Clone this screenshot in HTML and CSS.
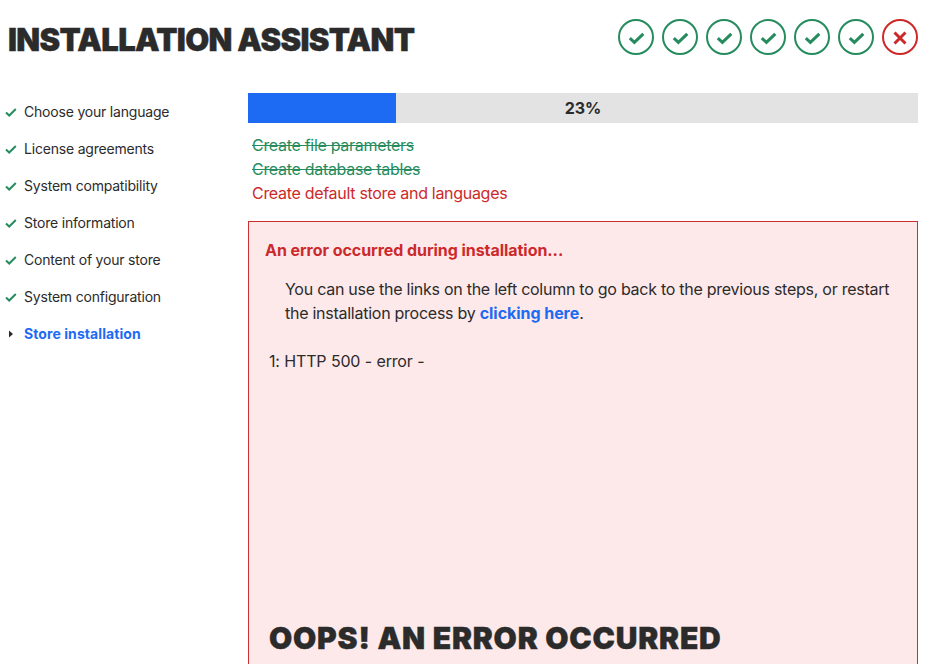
FILE: index.html
```html
<!DOCTYPE html>
<html lang="en">
<head>
<meta charset="utf-8">
<title>Installation Assistant</title>
<link rel="stylesheet" href="styles.css">
</head>
<body>
<header class="header">
  <h1 class="title">INSTALLATION ASSISTANT</h1>
  <div class="status">
    <svg class="badge ok" viewBox="0 0 36 36"><circle cx="18" cy="18" r="17"/><path d="M11.8 19.1l4.6 4.3 8.9-8.5"/></svg>
    <svg class="badge ok" viewBox="0 0 36 36"><circle cx="18" cy="18" r="17"/><path d="M11.8 19.1l4.6 4.3 8.9-8.5"/></svg>
    <svg class="badge ok" viewBox="0 0 36 36"><circle cx="18" cy="18" r="17"/><path d="M11.8 19.1l4.6 4.3 8.9-8.5"/></svg>
    <svg class="badge ok" viewBox="0 0 36 36"><circle cx="18" cy="18" r="17"/><path d="M11.8 19.1l4.6 4.3 8.9-8.5"/></svg>
    <svg class="badge ok" viewBox="0 0 36 36"><circle cx="18" cy="18" r="17"/><path d="M11.8 19.1l4.6 4.3 8.9-8.5"/></svg>
    <svg class="badge ok" viewBox="0 0 36 36"><circle cx="18" cy="18" r="17"/><path d="M11.8 19.1l4.6 4.3 8.9-8.5"/></svg>
    <svg class="badge err" viewBox="0 0 36 36"><circle cx="18" cy="18" r="17"/><path d="M12.5 13.5l11 11M23.5 13.5l-11 11"/></svg>
  </div>
</header>
<div class="layout">
  <nav class="nav">
    <div class="nav-item"><svg class="tick" viewBox="0 0 12 12"><path d="M1 6.5l3.2 3 6.6-6.5"/></svg>Choose your language</div>
    <div class="nav-item"><svg class="tick" viewBox="0 0 12 12"><path d="M1 6.5l3.2 3 6.6-6.5"/></svg>License agreements</div>
    <div class="nav-item"><svg class="tick" viewBox="0 0 12 12"><path d="M1 6.5l3.2 3 6.6-6.5"/></svg>System compatibility</div>
    <div class="nav-item"><svg class="tick" viewBox="0 0 12 12"><path d="M1 6.5l3.2 3 6.6-6.5"/></svg>Store information</div>
    <div class="nav-item"><svg class="tick" viewBox="0 0 12 12"><path d="M1 6.5l3.2 3 6.6-6.5"/></svg>Content of your store</div>
    <div class="nav-item"><svg class="tick" viewBox="0 0 12 12"><path d="M1 6.5l3.2 3 6.6-6.5"/></svg>System configuration</div>
    <div class="nav-item current"><svg class="caret" viewBox="0 0 12 12"><path d="M4 2.5l4 3.5-4 3.5z"/></svg>Store installation</div>
  </nav>
  <main class="main">
    <div class="progress">
      <div class="progress-fill" style="width:22.1%"></div>
      <span class="progress-label">23%</span>
    </div>
    <ul class="tasks">
      <li class="done">Create file parameters</li>
      <li class="done">Create database tables</li>
      <li class="failed">Create default store and languages</li>
    </ul>
    <section class="error-box">
      <p class="error-title">An error occurred during installation...</p>
      <p class="error-text">You can use the links on the left column to go back to the previous steps, or restart the installation process by <a class="error-link" href="#">clicking here</a>.</p>
      <p class="error-log">1: HTTP 500 - error -</p>
      <h2 class="error-heading">OOPS! AN ERROR OCCURRED</h2>
    </section>
  </main>
</div>
</body>
</html>
```
FILE: styles.css
```css
* { box-sizing: border-box; }
html, body { margin: 0; height: 664px; overflow: hidden; }
body { font-family: Inter, "Liberation Sans", sans-serif; color: #2b2b2b; background: #fff; }

.header { display: flex; justify-content: space-between; align-items: flex-start; padding: 22px 23px 0 8px; height: 93px; }
.title { margin: 0; font-size: 31px; line-height: 36px; font-weight: 900; letter-spacing: -0.65px; -webkit-text-stroke: 0.4px #2b2b2b; }
.status { display: flex; gap: 8px; margin-top: -3px; }
.badge { width: 36px; height: 36px; fill: none; stroke-width: 2; }
.badge path { stroke-width: 3; }
.badge.ok { stroke: #268c5e; }
.badge.err { stroke: #cc2a2a; }

.layout { display: flex; padding-right: 23px; }
.nav { width: 248px; padding: 0 0 0 5px; flex: none; }
.nav-item { display: flex; align-items: center; height: 37px; font-size: 14px; letter-spacing: -0.2px; color: #2b2b2b; }
.tick { width: 12px; height: 12px; margin-right: 7px; fill: none; stroke: #268c5e; stroke-width: 2; }
.caret { width: 12px; height: 12px; margin-right: 7px; fill: #2b2b2b; }
.nav-item.current { color: #1d6bf3; font-weight: 700; letter-spacing: 0.08px; }

.main { flex: 1; min-width: 0; }
.progress { position: relative; height: 30px; background: #e3e3e3; display: flex; align-items: center; justify-content: center; }
.progress-fill { position: absolute; left: 0; top: 0; bottom: 0; background: #1d6bf3; }
.progress-label { position: relative; font-size: 16px; font-weight: 700; }

.tasks { list-style: none; margin: 0; padding: 10px 0 16px 4px; font-size: 16px; line-height: 24px; letter-spacing: -0.3px; }
.done { color: #268c5e; text-decoration: line-through; }
.failed { color: #cc2a2a; }

.error-box { height: 443px; border: 1px solid #c9302f; border-bottom: 0; background: #fee9ea; padding: 16px 16px 0; }
.error-title { margin: 0 0 15px; font-size: 16px; line-height: 24px; font-weight: 700; color: #cc2a2a; letter-spacing: -0.05px; }
.error-text { margin: 0 0 16px 20px; font-size: 16px; line-height: 24px; letter-spacing: -0.26px; }
.error-link { color: #1d6bf3; font-weight: 700; text-decoration: none; letter-spacing: -0.05px; }
.error-log { margin: 0 0 0 4px; font-size: 16px; line-height: 24px; padding-top: 8px; letter-spacing: -0.2px; word-spacing: 0.3px; }
.error-heading { margin: 247px 0 0 4px; font-size: 30px; line-height: 36px; font-weight: 900; letter-spacing: 0.8px; -webkit-text-stroke: 0.4px #2b2b2b; }
```
